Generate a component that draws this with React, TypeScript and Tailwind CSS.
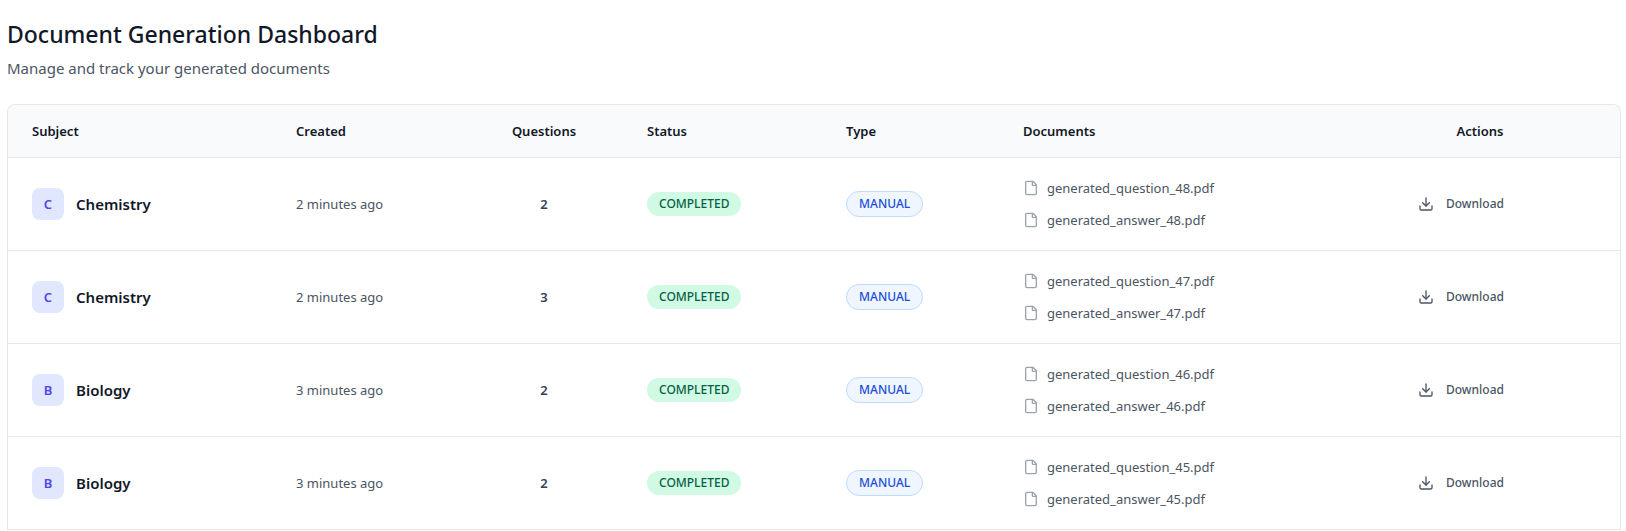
import React from 'react';
import { Download, File } from 'lucide-react';

interface DocumentJob {
    id: number;
    subject: string;
    created: string;
    questions: number;
    status: string;
    type: string;
}

const jobs: DocumentJob[] = [
    { id: 48, subject: 'Chemistry', created: '2 minutes ago', questions: 2, status: 'COMPLETED', type: 'MANUAL' },
    { id: 47, subject: 'Chemistry', created: '2 minutes ago', questions: 3, status: 'COMPLETED', type: 'MANUAL' },
    { id: 46, subject: 'Biology', created: '3 minutes ago', questions: 2, status: 'COMPLETED', type: 'MANUAL' },
    { id: 45, subject: 'Biology', created: '3 minutes ago', questions: 2, status: 'COMPLETED', type: 'MANUAL' },
];

const HeaderCell: React.FC<{ label: string; className?: string }> = ({ label, className = 'text-left' }) => (
    <th scope="col" className={`border-b border-[#e5e7eb] px-6 py-4 text-[13px] leading-5 font-semibold text-[#111827] ${className}`}>
        {label}
    </th>
);

const Cell: React.FC<{ children: React.ReactNode; className?: string }> = ({ children, className = '' }) => (
    <td className={`border-b border-[#e5e7eb] px-6 py-4 text-[13px] leading-5 ${className}`}>{children}</td>
);

const DocumentLink: React.FC<{ name: string }> = ({ name }) => (
    <a href={`#${name}`} className="flex items-center gap-2 py-1 text-[#4b5563] hover:text-[#4f46e5]">
        <File className="w-4 h-4 shrink-0 text-[#9ca3af]" />
        <span>{name}</span>
    </a>
);

const JobRow: React.FC<{ job: DocumentJob }> = ({ job }) => (
    <tr>
        <Cell>
            <div className="flex items-center gap-3">
                <div className="flex items-center justify-center w-8 h-8 rounded-lg bg-[#e0e7ff] font-semibold text-[#4f46e5]">
                    {job.subject.charAt(0)}
                </div>
                <span className="text-[15px] leading-6 font-semibold text-[#111827]">{job.subject}</span>
            </div>
        </Cell>
        <Cell className="text-[#4b5563]">{job.created}</Cell>
        <Cell className="text-center font-semibold text-[#374151]">{job.questions}</Cell>
        <Cell>
            <span className="inline-flex items-center rounded-full bg-[#d1fae5] px-3 py-1 text-xs font-medium text-[#065f46]">
                {job.status}
            </span>
        </Cell>
        <Cell>
            <span className="inline-flex items-center rounded-full border border-[#bfdbfe] bg-[#eff6ff] px-3 py-1 text-xs font-medium text-[#1d4ed8]">
                {job.type}
            </span>
        </Cell>
        <Cell>
            <div className="flex flex-col items-start gap-1">
                <DocumentLink name={`generated_question_${job.id}.pdf`} />
                <DocumentLink name={`generated_answer_${job.id}.pdf`} />
            </div>
        </Cell>
        <Cell>
            <div className="w-[148px] mx-auto">
                <button type="button" className="flex items-center gap-3 rounded-md px-3 py-2 text-xs font-medium text-[#4b5563] hover:bg-gray-100">
                    <Download className="w-4 h-4" />
                    Download
                </button>
            </div>
        </Cell>
    </tr>
);

const App: React.FC = () => {
    return (
        <main className="bg-white pt-4 pl-[7px] pr-[5px] font-['Noto_Sans','Open_Sans',sans-serif]">
            <header className="mb-6">
                <h1 className="text-[23px] leading-9 font-medium text-[#111827]">Document Generation Dashboard</h1>
                <p className="mt-1 text-[15px] leading-6 text-[#4b5563]">Manage and track your generated documents</p>
            </header>
            <div className="overflow-hidden rounded-t-lg border border-b-0 border-[#e5e7eb]">
                <table className="w-full table-fixed border-separate border-spacing-0">
                    <colgroup>
                        <col className="w-[264px]" />
                        <col className="w-[193px]" />
                        <col className="w-[158px]" />
                        <col className="w-[199px]" />
                        <col className="w-[177px]" />
                        <col />
                        <col className="w-[280px]" />
                    </colgroup>
                    <thead>
                        <tr className="bg-[#f9fafb]">
                            <HeaderCell label="Subject" />
                            <HeaderCell label="Created" />
                            <HeaderCell label="Questions" className="text-center" />
                            <HeaderCell label="Status" />
                            <HeaderCell label="Type" />
                            <HeaderCell label="Documents" />
                            <HeaderCell label="Actions" className="text-center" />
                        </tr>
                    </thead>
                    <tbody>
                        {jobs.map(job => (
                            <JobRow key={job.id} job={job} />
                        ))}
                    </tbody>
                </table>
            </div>
        </main>
    );
};

export default App;
